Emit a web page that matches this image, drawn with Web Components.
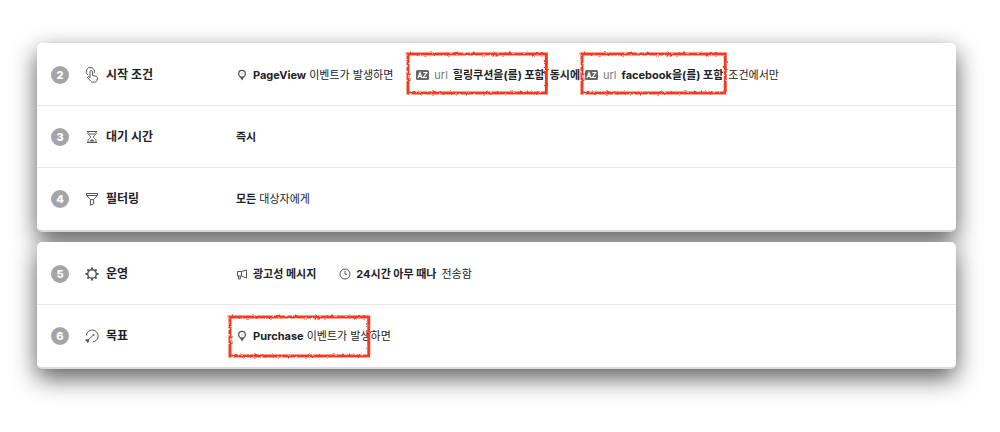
<!DOCTYPE html>
<html lang="ko">
<head>
<meta charset="utf-8">
<meta name="viewport" content="width=device-width, initial-scale=1">
<title>캠페인 설정</title>
<style>
body {
  margin: 0;
  background: #fff;
  color: #222326;
  font: 11px/20px Inter, "Noto Sans CJK KR", sans-serif;
}
</style>
</head>
<body>
<campaign-summary>
  <step-card>
    <step-row number="2" icon="touch" label="시작 조건">
      <rule-item icon="pin"><b>PageView</b> 이벤트가 발생하면</rule-item>
      <rule-chain>
        <marked-rule class="first"><rule-item icon="az" field="url"><b>힐링쿠션을(를) 포함</b></rule-item></marked-rule>
        <b>동시에</b>
        <marked-rule class="second"><rule-item icon="az" field="url"><b>facebook을(를) 포함</b></rule-item></marked-rule>
        <span>조건에서만</span>
      </rule-chain>
    </step-row>
    <step-row number="3" icon="hourglass" label="대기 시간">
      <rule-item><b>즉시</b></rule-item>
    </step-row>
    <step-row number="4" icon="funnel" label="필터링">
      <rule-item><b>모든</b> 대상자에게</rule-item>
    </step-row>
  </step-card>
  <step-card>
    <step-row number="5" icon="gear" label="운영">
      <rule-item icon="megaphone"><b>광고성 메시지</b></rule-item>
      <rule-chain>
        <rule-item icon="clock"><b>24시간 아무 때나</b></rule-item>
        <span>전송함</span>
      </rule-chain>
    </step-row>
    <step-row number="6" icon="goal" label="목표">
      <marked-rule class="goal"><rule-item icon="pin"><b>Purchase</b> 이벤트가 발생하면</rule-item></marked-rule>
    </step-row>
  </step-card>
</campaign-summary>

<script>
const icons = {
  touch: `<svg width="14" height="16" viewBox="0 0 14 16">
    <path d="M3.2 8.2A4.2 4.2 0 1 1 9.2 6.2"/>
    <path d="M5 10.4V4.7a1.2 1.2 0 0 1 2.4 0v3.7l3.8.9c1 .3 1.4.9 1.3 1.8l-.5 2.3c-.3 1.1-1 1.7-2.2 1.7H7.7c-.8 0-1.3-.3-1.8-.9L2.6 10.8c-.4-.6.2-1.4 1-1.1z"/>
  </svg>`,
  hourglass: `<svg width="14" height="14" viewBox="0 0 14 14">
    <path d="M2 1.500h10M2 12.500h10M3 1.500v2C3 5.100 5.600 5.900 5.600 7S3 8.900 3 10.500v2M11 1.500v2C11 5.100 8.400 5.900 8.400 7s2.600 1.900 2.600 3.500v2M4 4h6"/>
    <path fill="currentColor" stroke="none" d="M4.500 11.600c0-1.500 1.600-1.500 2.500-2.600.9 1.100 2.500 1.100 2.500 2.600z"/>
  </svg>`,
  funnel: `<svg width="14" height="14" viewBox="0 0 14 14">
    <path d="M1.500 1.500h11v1.800L8.600 7.600v4.200l-3.200 1.400V7.600L1.500 3.300zM2 3.500h10M5.500 7.600h3"/>
  </svg>`,
  gear: `<svg width="14" height="14" viewBox="0 0 14 14">
    <circle cx="7" cy="7" r="4.300" stroke-width="1.500"/>
    <path stroke-width="2" d="M7 .5v2M7 11.500v2M.5 7h2M11.500 7h2M2.400 2.400l1.400 1.400M10.200 10.200l1.400 1.400M2.400 11.600l1.400-1.400M10.200 3.800l1.400-1.400"/>
  </svg>`,
  goal: `<svg width="14" height="14" viewBox="0 0 14 14">
    <path d="M1.200 6.600A6 6 0 1 1 7.600 13M8.800 5.600l-6 5.700"/>
    <path fill="currentColor" stroke="none" d="M7.400 5.400l2.200-.4-.5 2.200zM.5 10.500l3-.6.7 1-.6 2.600-1.300.2-.4-1.500-1.500-.3z"/>
  </svg>`,
  pin: `<svg width="12" height="12" viewBox="0 0 12 12">
    <path fill="currentColor" fill-rule="evenodd" stroke="none" d="M6 .8a4 4 0 0 0-4 4c0 1.600.9 2.800 2.200 3.600L6 11.500l1.800-3.100C9.100 7.600 10 6.400 10 4.800a4 4 0 0 0-4-4zm0 1.300a2.700 2.700 0 1 1 0 5.400 2.700 2.700 0 0 1 0-5.400z"/>
    <circle cx="6" cy="4.800" r="1" stroke="none" fill="#ccc"/>
  </svg>`,
  az: `<svg width="13" height="10" viewBox="0 0 13 10">
    <rect width="13" height="10" rx="1.500" fill="#66676b" stroke="none"/>
    <path stroke="#fff" stroke-width="1.100" d="M2 8l2-5.500L6 8M2.700 6.400h2.600M7.300 2.500h3.500L7.300 7.500H11"/>
  </svg>`,
  megaphone: `<svg width="12" height="12" viewBox="0 0 12 12">
    <path d="M1.500 3.500h4l5-1.500v8l-5-2h-4zM2.500 8v3h1.800V8M5.500 3.500V8"/>
  </svg>`,
  clock: `<svg width="12" height="12" viewBox="0 0 12 12">
    <circle cx="6" cy="6" r="5"/>
    <path d="M6 3v3.200h2.300"/>
  </svg>`
};

const iconStyle = `
  svg {
    display: block;
    flex: none;
    color: #55565a;
    fill: none;
    stroke: currentColor;
    stroke-width: 1;
  }
`;

class CampaignSummary extends HTMLElement {
  constructor() {
    super();
    this.attachShadow({mode: 'open'}).innerHTML = `
<style>
:host {
  display: flex;
  flex-direction: column;
  gap: 10px;
  padding: 43px 44px 63px 37px;
}
</style>
<slot></slot>`;
  }
}

class StepCard extends HTMLElement {
  constructor() {
    super();
    this.attachShadow({mode: 'open'}).innerHTML = `
<style>
:host {
  display: block;
  padding-top: 1px;
  background: #fff;
  border-bottom: 2px solid #dcdddd;
  border-radius: 5px;
  box-shadow: 0 9px 24px rgba(0, 0, 0, .65);
}
::slotted(step-row:not(:last-child)) {
  border-bottom: 1px solid #e6e6e6;
}
</style>
<slot></slot>`;
  }
}

class StepRow extends HTMLElement {
  connectedCallback() {
    if (this.shadowRoot) return;
    this.attachShadow({mode: 'open'}).innerHTML = `
<style>
${iconStyle}
:host {
  display: flex;
  align-items: center;
  box-sizing: border-box;
  min-height: 62px;
  padding: 0 14px;
}
.number {
  flex: none;
  width: 18px;
  border-radius: 9px;
  background: #a5a5a7;
  color: #fff;
  font-size: 11px;
  font-weight: 800;
  line-height: 18px;
  text-align: center;
}
.icon {
  display: flex;
  justify-content: center;
  width: 14px;
  margin: 0 7px 0 16px;
}
h2 {
  flex: none;
  width: 130px;
  margin: 0;
  font-size: 12px;
  font-weight: 700;
}
.rules {
  display: flex;
  align-items: center;
  gap: 23px;
  white-space: nowrap;
}
</style>
<span class="number">${this.getAttribute('number')}</span>
<span class="icon">${icons[this.getAttribute('icon')]}</span>
<h2>${this.getAttribute('label')}</h2>
<div class="rules"><slot></slot></div>`;
  }
}

class RuleItem extends HTMLElement {
  connectedCallback() {
    if (this.shadowRoot) return;
    const icon = icons[this.getAttribute('icon')] || '';
    const field = this.getAttribute('field');
    this.attachShadow({mode: 'open'}).innerHTML = `
<style>
${iconStyle}
:host {
  display: flex;
  align-items: center;
  gap: 5px;
}
.field {
  color: #77787c;
}
</style>
${icon}${field ? `<span class="field">${field}</span>` : ''}
<span><slot></slot></span>`;
  }
}

class RuleChain extends HTMLElement {
  constructor() {
    super();
    this.attachShadow({mode: 'open'}).innerHTML = `
<style>
:host {
  display: flex;
  align-items: center;
  gap: 5px;
}
</style>
<slot></slot>`;
  }
}

// Draws a crayon-like red frame over its content
class MarkedRule extends HTMLElement {
  constructor() {
    super();
    this.attachShadow({mode: 'open'}).innerHTML = `
<style>
:host {
  display: block;
  position: relative;
  --top: 13px;
  --left: 10px;
  --right: 4px;
}
:host(.second) {
  --left: 5px;
}
:host(.goal) {
  --top: 11px;
  --left: 8px;
  --right: -20px;
}
svg {
  position: absolute;
  top: calc(0px - var(--top));
  left: calc(0px - var(--left));
  width: calc(100% + var(--left) + var(--right));
  height: 43px;
  overflow: visible;
  pointer-events: none;
}
rect {
  width: calc(100% - 4px);
  height: calc(100% - 4px);
  fill: none;
  stroke: #f23c22;
  stroke-width: 3;
}
</style>
<slot></slot>
<svg aria-hidden="true">
  <filter id="rough" x="-5%" y="-10%" width="110%" height="120%" color-interpolation-filters="sRGB">
    <feTurbulence type="fractalNoise" baseFrequency="0.3" numOctaves="2" seed="4"/>
    <feDisplacementMap in="SourceGraphic" scale="3" xChannelSelector="R" yChannelSelector="G"/>
  </filter>
  <rect x="2" y="2" filter="url(#rough)"/>
</svg>`;
  }
}

customElements.define('campaign-summary', CampaignSummary);
customElements.define('step-card', StepCard);
customElements.define('step-row', StepRow);
customElements.define('rule-item', RuleItem);
customElements.define('rule-chain', RuleChain);
customElements.define('marked-rule', MarkedRule);
</script>
</body>
</html>
